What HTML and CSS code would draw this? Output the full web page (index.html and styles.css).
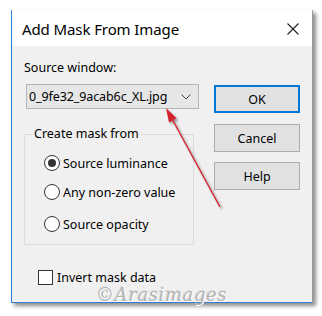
FILE: index.html
```html
<!DOCTYPE html>
<html>
<head>
<meta charset="utf-8">
<link rel="stylesheet" href="styles.css">
</head>
<body>
<div class="window">
  <div class="titlebar">
    <span class="title">Add Mask From Image</span>
    <svg class="close" width="12" height="12" viewBox="0 0 12 12"><path d="M0.5 0.5 L11.5 11.5 M11.5 0.5 L0.5 11.5" stroke="#222" stroke-width="1.1" fill="none"/></svg>
  </div>
  <div class="body">
    <div class="main">
      <div class="left">
        <div class="label">Source window:</div>
        <div class="combo">
          <span class="combo-text">0_9fe32_9acab6c_XL.jpg</span>
          <svg class="chev" width="10" height="6" viewBox="0 0 10 6"><path d="M0.5 0.5 L5 5 L9.5 0.5" stroke="#444" stroke-width="1" fill="none"/></svg>
        </div>
        <fieldset class="group">
          <legend>Create mask from</legend>
          <div class="radio r1"><span class="dot checked"></span><span>Source luminance</span></div>
          <div class="radio r2"><span class="dot"></span><span>Any non-zero value</span></div>
          <div class="radio r3"><span class="dot"></span><span>Source opacity</span></div>
        </fieldset>
      </div>
      <div class="right">
        <div class="btn ok">OK</div>
        <div class="btn cancel">Cancel</div>
        <div class="btn help">Help</div>
      </div>
    </div>
    <div class="check"><span class="box"></span><span class="check-text">Invert mask data</span></div>
  </div>
</div>
<div class="watermark">©Arasimages</div>
<svg class="arrow" width="322" height="316" viewBox="0 0 322 316">
  <line x1="220" y1="207" x2="171" y2="117" stroke="#d4202c" stroke-width="1.4"/>
  <polygon points="166,108 176.5,118.2 169,122.4" fill="#d4202c"/>
</svg>
</body>
</html>
```
FILE: styles.css
```css
html, body {
  margin: 0;
  padding: 0;
  background: #ffffff;
}
body {
  width: 322px;
  height: 316px;
  position: relative;
  overflow: hidden;
  font-family: "Noto Sans", "Open Sans", sans-serif;
  color: #000;
}
.window {
  position: absolute;
  left: 11px;
  top: 10px;
  width: 300px;
  height: 292px;
  border-left: 1px solid #2f7fd6;
  border-bottom: 1px solid #2f7fd6;
  border-right: 1px solid #9a9a9a;
  box-shadow: 3px 3px 4px rgba(0,0,0,0.45);
  display: flex;
  flex-direction: column;
}
.titlebar {
  height: 36px;
  background: #ffffff;
  display: flex;
  align-items: center;
  padding: 0 13px 0 10px;
  justify-content: space-between;
}
.title {
  font-size: 15px;
  color: #000;
  letter-spacing: -0.1px;
  margin-top: 1px;
}
.close {
  display: block;
  margin-top: 1px;
}
.body {
  flex: 1;
  background: #f0f0f0;
  padding: 13px 0 0 12px;
  font-size: 12.5px;
}
.main {
  display: flex;
}
.left {
  width: 173px;
}
.label {
  height: 17px;
  line-height: 17px;
}
.combo {
  margin: 8px 0 0 2px;
  height: 23px;
  border: 1px solid #b5b5b5;
  background: #e6e6e6;
  display: flex;
  align-items: center;
  justify-content: space-between;
  padding: 0 7px 0 2px;
  box-sizing: content-box;
  width: 162px;
}
.combo-text {
  letter-spacing: -0.1px;
}
.chev {
  display: block;
}
.group {
  margin: 17px 0 0 0;
  padding: 0;
  border: 1px solid #dcdcdc;
  width: 170px;
  box-sizing: border-box;
  height: 119px;
}
.group legend {
  margin-left: 7px;
  padding: 0 2px;
  line-height: 16px;
}
.radio {
  display: flex;
  align-items: center;
  margin-left: 19px;
  height: 18px;
}
.r1 { margin-top: 12px; }
.r2 { margin-top: 11px; }
.r3 { margin-top: 14px; }
.dot {
  width: 14px;
  height: 14px;
  border: 1px solid #333;
  border-radius: 50%;
  background: #fff;
  margin-right: 3px;
  display: flex;
  align-items: center;
  justify-content: center;
  flex: none;
}
.dot.checked::after {
  content: "";
  width: 8px;
  height: 8px;
  border-radius: 50%;
  background: #333;
}
.right {
  margin-left: 17px;
  margin-top: 26px;
  display: flex;
  flex-direction: column;
}
.btn {
  width: 86px;
  height: 28px;
  box-sizing: border-box;
  border: 1px solid #adadad;
  background: #e1e1e1;
  display: flex;
  align-items: center;
  justify-content: center;
}
.btn.ok {
  border: 2px solid #0078d7;
}
.btn.cancel { margin-top: 11px; }
.btn.help { margin-top: 10px; }
.check {
  display: flex;
  align-items: center;
  margin: 25px 0 0 14px;
  height: 15px;
}
.check-text {
  line-height: 14px;
}
.box {
  width: 13px;
  height: 13px;
  border: 1px solid #333;
  background: #fff;
  margin-right: 4px;
}
.watermark {
  position: absolute;
  left: 96px;
  top: 287px;
  line-height: 15px;
  font-family: "DejaVu Serif", serif;
  font-style: italic;
  font-size: 18px;
  color: #b3b3b3;
  text-shadow: 1px 1px 0 #fff, -1px -1px 0 #8a8a8a33;
  letter-spacing: 0.6px;
}
.arrow {
  position: absolute;
  left: 0;
  top: 0;
  filter: drop-shadow(2px 2px 1px rgba(0,0,0,0.35));
}
```
